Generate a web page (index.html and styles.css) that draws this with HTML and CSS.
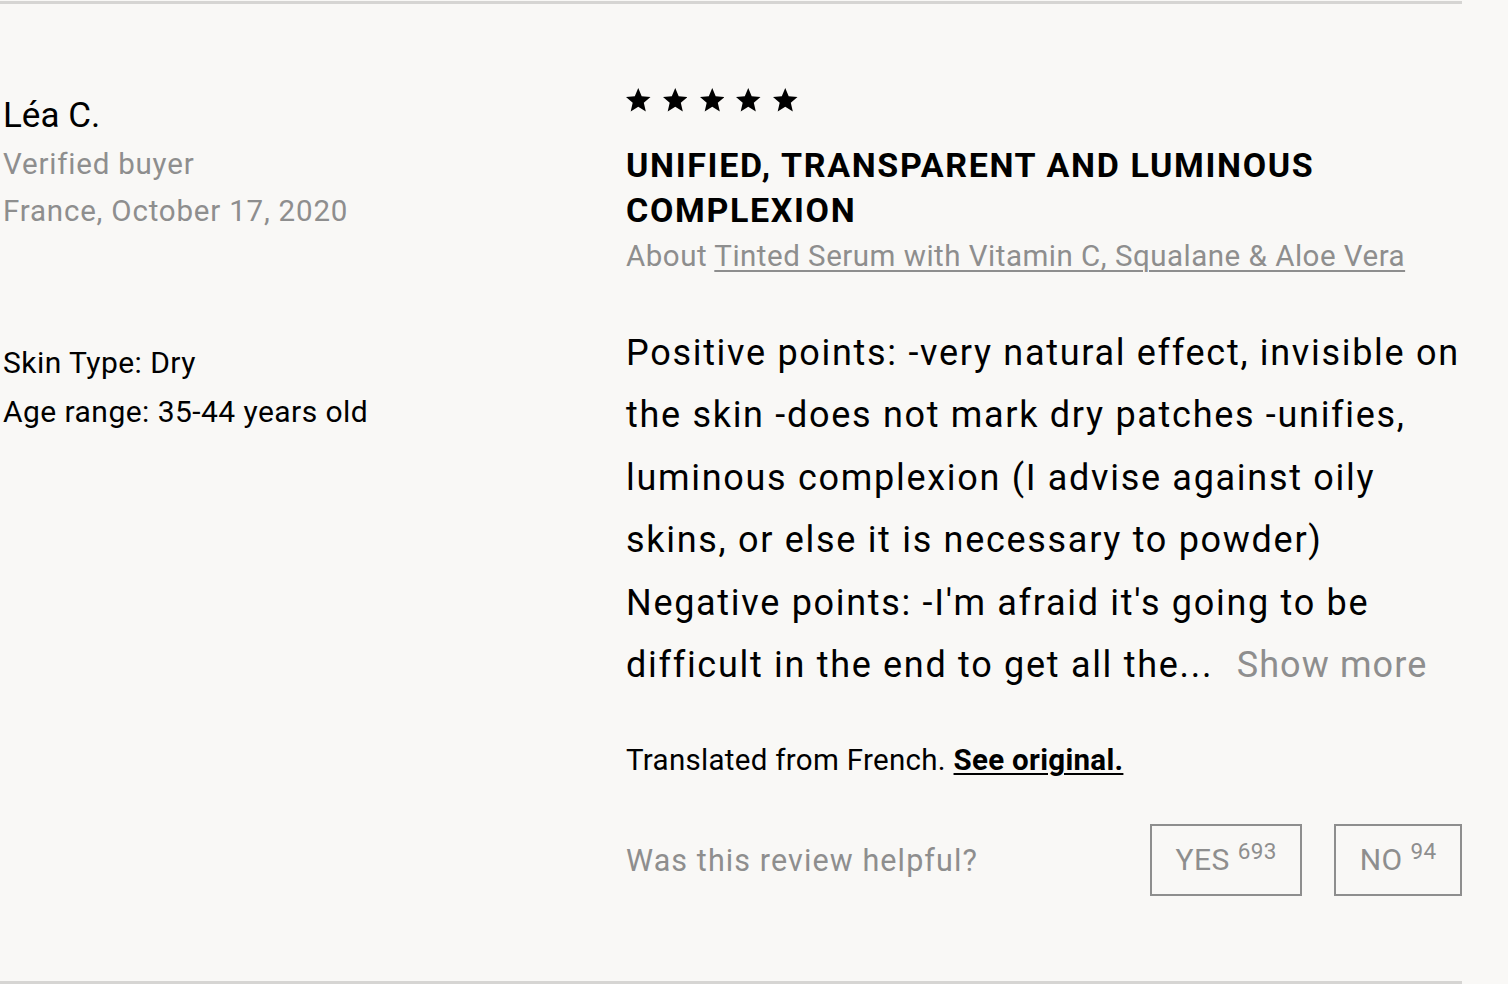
FILE: index.html
```html
<!DOCTYPE html>
<html lang="en">
<head>
<meta charset="utf-8">
<title>Review</title>
<link rel="stylesheet" href="styles.css">
</head>
<body>
<article class="review">
  <aside class="author">
    <div class="name">Léa C.</div>
    <div class="meta">Verified buyer</div>
    <div class="meta">France, October 17, 2020</div>
    <div class="attrs">
      <div class="attr">Skin Type: Dry</div>
      <div class="attr">Age range: 35-44 years old</div>
    </div>
  </aside>
  <section class="content">
    <div class="stars" aria-label="5 out of 5 stars">
      <svg viewBox="2 2 20 19"><path d="M12 17.27L18.18 21l-1.64-7.03L22 9.24l-7.19-.61L12 2 9.19 8.63 2 9.24l5.46 4.73L5.82 21z"/></svg>
      <svg viewBox="2 2 20 19"><path d="M12 17.27L18.18 21l-1.64-7.03L22 9.24l-7.19-.61L12 2 9.19 8.63 2 9.24l5.46 4.73L5.82 21z"/></svg>
      <svg viewBox="2 2 20 19"><path d="M12 17.27L18.18 21l-1.64-7.03L22 9.24l-7.19-.61L12 2 9.19 8.63 2 9.24l5.46 4.73L5.82 21z"/></svg>
      <svg viewBox="2 2 20 19"><path d="M12 17.27L18.18 21l-1.64-7.03L22 9.24l-7.19-.61L12 2 9.19 8.63 2 9.24l5.46 4.73L5.82 21z"/></svg>
      <svg viewBox="2 2 20 19"><path d="M12 17.27L18.18 21l-1.64-7.03L22 9.24l-7.19-.61L12 2 9.19 8.63 2 9.24l5.46 4.73L5.82 21z"/></svg>
    </div>
    <h2 class="title">UNIFIED, TRANSPARENT AND LUMINOUS COMPLEXION</h2>
    <p class="about">About <a href="#">Tinted Serum with Vitamin C, Squalane &amp; Aloe Vera</a></p>
    <p class="body">Positive points: -very natural effect, invisible on<br>the skin -does not mark dry patches -unifies,<br>luminous complexion (I advise against oily<br>skins, or else it is necessary to powder)<br>Negative points: -I'm afraid it's going to be<br>difficult in the end to get all the... <span class="more">Show more</span></p>
    <p class="translated">Translated from French. <a href="#">See original.</a></p>
    <div class="helpful">
      <span class="question">Was this review helpful?</span>
      <div class="votes">
        <button class="vote"><span class="vote-label">YES <sup>693</sup></span></button>
        <button class="vote"><span class="vote-label">NO <sup>94</sup></span></button>
      </div>
    </div>
  </section>
</article>
</body>
</html>
```
FILE: styles.css
```css
* { box-sizing: border-box; }
html, body { margin: 0; padding: 0; }
body {
  background: #f9f8f6;
  color: #000;
  font-family: "Roboto", "Liberation Sans", sans-serif;
  width: 1508px;
  height: 984px;
  overflow: hidden;
}
.review {
  width: 1462px;
  margin-top: 1px;
  border-top: 3px solid #d6d5d3;
  border-bottom: 3px solid #d6d5d3;
  display: grid;
  grid-template-columns: 626px 1fr;
  padding: 84px 0 85px;
}

/* left column */
.author { padding-left: 3px; }
.name { margin-top: 4px; font-size: 35px; line-height: 47px; }
.meta { margin-top: 3px; font-size: 29.5px; line-height: 44px; letter-spacing: 0.8px; color: #8e8e8e; }
.meta + .meta { margin-top: 3px; }
.attrs { margin-top: 105px; }
.attr { font-size: 30px; line-height: 49px; letter-spacing: 0.45px; }

/* right column */
.stars { display: flex; gap: 12.3px; height: 24px; }
.stars svg { width: 24.5px; height: 23.5px; fill: #000; }
.title { margin: 31px 0 0; font-size: 34px; font-weight: 700; line-height: 45px; letter-spacing: 1.65px; }
.about { margin: 1px 0 0; font-size: 29.5px; line-height: 44px; letter-spacing: 0.5px; color: #8e8e8e; }
.about a { color: inherit; text-decoration: underline; text-decoration-thickness: 2px; text-underline-offset: 4px; }
.body { margin: 44px 0 0; font-size: 36px; line-height: 62.4px; letter-spacing: 1.7px; white-space: nowrap; }
.more { color: #8e8e8e; margin-left: 13px; letter-spacing: 1.1px; }
.translated { margin: 44px 0 0; font-size: 29.5px; line-height: 40px; letter-spacing: 0.3px; }
.translated a { color: #000; font-weight: 700; text-decoration-thickness: 2px; text-underline-offset: 3px; }
.helpful { display: flex; justify-content: space-between; align-items: center; margin-top: 44px; }
.question { font-size: 30.5px; letter-spacing: 1.1px; color: #8e8e8e; }
.votes { display: flex; gap: 32px; }
.vote {
  display: flex;
  align-items: center;
  height: 72px;
  padding: 0 23.5px;
  background: transparent;
  border: 2px solid #8e8e8e;
  border-radius: 0;
  color: #8e8e8e;
  font-family: inherit;
  font-size: 30px;
}
.vote-label { white-space: nowrap; letter-spacing: 0.5px; line-height: 36px; }
.vote sup { font-size: 22.5px; line-height: 0; vertical-align: 11px; letter-spacing: 0.3px; }
```
